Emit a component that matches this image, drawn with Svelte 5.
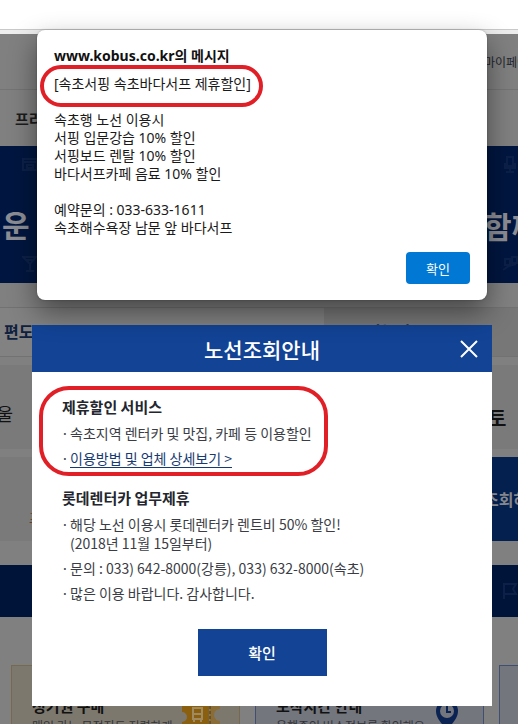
<script lang="ts">
  const alertLines = [
    '[속초서핑 속초바다서프 제휴할인]',
    '',
    '속초행 노선 이용시',
    '서핑 입문강습 10% 할인',
    '서핑보드 렌탈 10% 할인',
    '바다서프카페 음료 10% 할인',
    '',
    '예약문의 : 033-633-1611',
    '속초해수욕장 남문 앞 바다서프'
  ]

  let alertOpen = $state(true)
  let noticeOpen = $state(true)
</script>

<div class="screen">
  <div class="browser-bar"></div>

  <div class="page" inert>
    <div class="util"><span class="edge">마이페이지</span></div>
    <nav class="nav"><a href="#premium">프리미엄</a></nav>

    <div class="hero">
      <div class="hero-side">
        <svg width="16" height="16" viewBox="0 0 16 16"><path d="M1 3h14v11H1zM1 6h14M5 9h6v3H5z" /></svg>
        <strong>운</strong>
        <svg width="16" height="18" viewBox="0 0 16 18"><path d="M1 2h13L8 9zM8 9v7M4 16h8M4 5h7" /></svg>
      </div>
      <div class="hero-side right">
        <svg width="16" height="18" viewBox="0 0 16 18"><path d="M5 1h6v9H5zM3 7v5h10V7M8 12v4M4 16h8" /></svg>
        <strong>함께</strong>
        <svg width="16" height="18" viewBox="0 0 16 18"><path d="M3 4h5v6H3zM10 2h5v6h-5zM1 15l6-4 7-2" /></svg>
      </div>
    </div>

    <div class="tabs">
      <span class="tab active">편도</span>
      <span class="tab">가는날</span>
    </div>

    <div class="box"><span>서울</span><strong>토</strong></div>
    <div class="box search">
      <em>프리미엄</em>
      <button type="button">조회하기</button>
    </div>

    <div class="band">
      <svg width="16" height="18" viewBox="0 0 16 18"><path d="M2 17V2h12l-3 5 3 5H2" /></svg>
    </div>

    <div class="cards">
      <article class="card gold">
        <div>
          <h4>정기권 구매</h4>
          <p>매일 가는 목적지도 저렴하게</p>
        </div>
        <svg width="40" height="32" viewBox="0 0 40 32">
          <path fill="#8a5f10" d="M1 1h27v30H1v-9a5 5 0 0 0 0-10z" />
          <path fill="#8a6c36" d="M29 1h10v8a5 5 0 0 0 0 12v10H29z" />
          <path fill="none" stroke="#a08a60" stroke-width="2" d="M12 8h9v11h-9zM12 14h9M13 19v3M20 19v3" />
          <path fill="none" stroke="#4a3610" stroke-dasharray="3 2" d="M29 1v30" />
        </svg>
      </article>
      <article class="card blue">
        <div>
          <h4>도착시간 안내</h4>
          <p>운행중인 버스정보를 확인해요</p>
        </div>
        <svg width="24" height="32" viewBox="0 0 24 32">
          <path fill="#0b2352" d="M12 0a11 11 0 0 1 11 11c0 8-7 13-11 20C8 24 1 19 1 11A11 11 0 0 1 12 0z" />
          <circle cx="12" cy="11" r="7" fill="#73767d" />
          <path fill="none" stroke="#0b2352" stroke-width="2" d="M12 6v6h4" />
        </svg>
      </article>
      <article class="card blue"></article>
    </div>
  </div>

  <div class="layer">
    {#if alertOpen}
      <div class="alert" role="alertdialog" aria-labelledby="alert-title">
        <h2 id="alert-title">www.kobus.co.kr의 메시지</h2>
        <div class="message">
          {#each alertLines as line, i}
            <p class:marked={i === 0}>{line}</p>
          {/each}
        </div>
        <button type="button" onclick={() => (alertOpen = false)}>확인</button>
      </div>
    {/if}

    {#if noticeOpen}
      <div class="notice" role="dialog" aria-labelledby="notice-title">
        <header>
          <h2 id="notice-title">노선조회안내</h2>
          <button type="button" class="close" aria-label="닫기" onclick={() => (noticeOpen = false)}>
            <svg width="18" height="18" viewBox="0 0 18 18"><path d="M1 1l16 16M17 1L1 17" /></svg>
          </button>
        </header>
        <div class="content">
          <section class="marked">
            <h3>제휴할인 서비스</h3>
            <ul>
              <li>속초지역 렌터카 및 맛집, 카페 등 이용할인</li>
              <li><a href="#detail">이용방법 및 업체 상세보기 &gt;</a></li>
            </ul>
          </section>
          <section>
            <h3>롯데렌터카 업무제휴</h3>
            <ul>
              <li>해당 노선 이용시 롯데렌터카 렌트비 50% 할인!<br />(2018년 11월 15일부터)</li>
              <li>문의 : 033) 642-8000(강릉), 033) 632-8000(속초)</li>
              <li>많은 이용 바랍니다. 감사합니다.</li>
            </ul>
          </section>
          <button type="button" class="ok" onclick={() => (noticeOpen = false)}>확인</button>
        </div>
      </div>
    {/if}
  </div>
</div>

<style>
  :global(body) {
    background: #808080;
  }

  .screen {
    position: relative;
    height: 100vh;
    overflow: hidden;
    box-sizing: border-box;
    font-family: 'Noto Sans CJK KR', sans-serif;
    font-size: 14px;
    color: #23262e;
  }

  .screen :is(h2, h3, h4, p, ul) {
    margin: 0;
    padding: 0;
  }

  button {
    padding: 0;
    border: 0;
    font-family: inherit;
    cursor: pointer;
  }

  .browser-bar {
    height: 29px;
    background: #fff;
    border-bottom: 1px solid #c8cac8;
  }

  .page {
    border-top: 4px solid #ededed;
    background: #808080;
    white-space: nowrap;
  }

  .util {
    display: flex;
    justify-content: flex-end;
    align-items: center;
    height: 55px;
    border-bottom: 1px solid #747474;
    font-size: 12px;
  }

  .edge {
    width: 34px;
  }

  .nav {
    display: flex;
    align-items: center;
    height: 56px;
    padding-left: 15px;
  }

  .nav a {
    color: #1c1c1c;
    font-size: 15px;
    font-weight: 700;
    text-decoration: none;
  }

  .hero {
    display: flex;
    justify-content: space-between;
    height: 137px;
    background: #001640;
    color: #8c8e94;
  }

  .hero-side {
    display: flex;
    flex-direction: column;
    justify-content: space-between;
    align-items: flex-end;
    width: 38px;
    padding: 10px 0;
    box-sizing: border-box;
  }

  .hero-side strong {
    width: 36px;
    font-size: 30px;
    line-height: 44px;
    padding-top: 20px;
  }

  .hero-side.right {
    width: 34px;
  }

  .hero-side.right strong {
    width: 34px;
  }

  .hero-side svg,
  .band svg {
    fill: none;
    stroke: #0c2048;
    stroke-width: 2;
  }

  .tabs {
    display: grid;
    grid-template-columns: 5fr 3fr;
    height: 48px;
    margin-top: 24px;
    border-top: 1px solid #727272;
    border-bottom: 1px solid #727272;
  }

  .tab {
    padding-left: 43px;
    background: #777;
    font-size: 16px;
    font-weight: 700;
    line-height: 46px;
  }

  .tab.active {
    padding-left: 4px;
    background: #828282;
    color: #10203f;
  }

  .box {
    display: flex;
    justify-content: space-between;
    align-items: center;
    height: 84px;
    margin-top: 8px;
    background: #7a7a7a;
    color: #111;
    font-size: 18px;
  }

  .box span {
    margin-left: -20px;
    padding-top: 12px;
  }

  .box strong {
    width: 30px;
    padding-top: 20px;
    font-size: 20px;
  }

  .box em {
    padding: 36px 0 0 29px;
    color: #6b3f20;
    font-size: 13px;
    font-style: normal;
  }

  .search button {
    width: 34px;
    height: 84px;
    background: #04204f;
    color: #85878c;
    font-size: 16px;
    font-weight: 700;
    text-align: left;
    white-space: nowrap;
  }

  .band {
    display: flex;
    justify-content: flex-end;
    align-items: center;
    height: 52px;
    margin-top: 24px;
    background: #001338;
  }

  .cards {
    display: flex;
    gap: 15px;
    margin-top: 48px;
    padding-left: 11px;
  }

  .card {
    display: flex;
    flex: 0 0 229px;
    justify-content: space-between;
    align-items: flex-start;
    height: 100px;
    padding: 30px 18px 0 20px;
    border: 1px solid #77694d;
    box-sizing: border-box;
  }

  .card div {
    width: 144px;
  }

  .card svg {
    flex: none;
    margin-top: 4px;
  }

  .card h4 {
    color: #111;
    font-size: 15px;
    line-height: 20px;
  }

  .card p {
    color: #33343a;
    font-size: 12px;
    line-height: 20px;
  }

  .gold {
    background: #7c786e;
  }

  .blue {
    background: #73767d;
    border-color: #3f4f72;
  }

  .blue svg {
    margin-right: 6px;
  }

  .layer {
    position: absolute;
    inset: 0;
    padding: 30px 26px 0 32px;
  }

  .alert {
    position: relative;
    z-index: 1;
    display: flex;
    flex-direction: column;
    margin: 0 5px 25px;
    padding: 16px 17px;
    background: #fff;
    border-radius: 8px;
    box-shadow: 0 0 2px rgba(0, 0, 0, 0.3), 0 12px 28px rgba(0, 0, 0, 0.45);
    color: #1a1a1a;
    font-family: 'Noto Sans', 'Noto Sans CJK KR', sans-serif;
  }

  .alert h2 {
    margin-bottom: 9px;
    color: #111;
    font-size: 14px;
    line-height: 20px;
  }

  .alert p {
    min-height: 18px;
    font-size: 14px;
    line-height: 18px;
  }

  .alert button {
    align-self: flex-end;
    width: 64px;
    height: 32px;
    margin-top: 15px;
    background: #0078d4;
    border-radius: 4px;
    color: #fff;
    font-size: 13px;
  }

  .marked {
    position: relative;
    width: fit-content;
  }

  /* red highlight ring */
  .marked::after {
    content: '';
    position: absolute;
    inset: -10px -12px -14px -14px;
    border: 4px solid #e01f26;
    border-radius: 22px;
    pointer-events: none;
  }

  section.marked::after {
    inset: -9px -16px -8px -23px;
    border-radius: 30px;
  }

  .notice {
    background: #fff;
  }

  .notice header {
    display: flex;
    align-items: center;
    height: 47px;
    padding: 0 14px;
    background: #124395;
    color: #fff;
  }

  .notice h2 {
    flex: 1;
    padding-left: 18px;
    font-size: 21px;
    font-weight: 500;
    text-align: center;
  }

  .close {
    display: flex;
    background: none;
  }

  .close svg {
    fill: none;
    stroke: #fff;
    stroke-width: 2;
  }

  .content {
    display: flex;
    flex-direction: column;
    gap: 18px;
    padding: 23px 30px 30px;
  }

  .notice h3 {
    margin-bottom: 5px;
    color: #23262e;
    font-size: 15px;
    line-height: 24px;
  }

  .notice ul {
    display: flex;
    flex-direction: column;
    gap: 6px;
    list-style: none;
  }

  .notice li {
    position: relative;
    padding-left: 8px;
    color: #3a3d45;
    line-height: 19px;
  }

  .notice li::before {
    content: '·';
    position: absolute;
    left: -1px;
  }

  .notice a {
    color: #173a70;
    text-underline-offset: 3px;
  }

  .ok {
    align-self: center;
    width: 129px;
    height: 47px;
    margin-top: 8px;
    background: #124395;
    color: #fff;
    font-size: 15px;
    font-weight: 500;
  }
</style>
